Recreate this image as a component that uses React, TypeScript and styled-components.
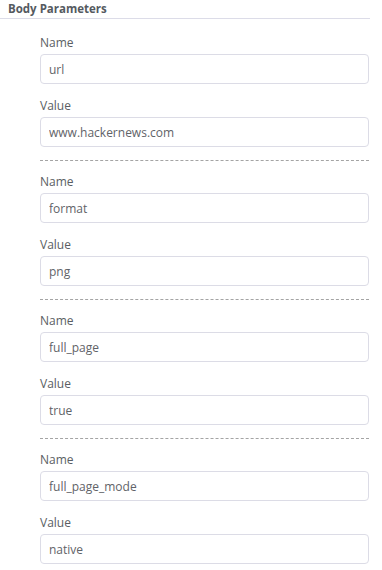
import styled, { createGlobalStyle } from 'styled-components';

const GlobalStyle = createGlobalStyle`
  body {
    margin: 0;
    background: #ffffff;
    font-family: 'Open Sans', Lato, sans-serif;
  }
`;

const Container = styled.div`
  width: 382px;
  height: 570px;
  overflow: hidden;
`;

const Header = styled.div`
  width: 362px;
  padding: 1px 0 2px 8px;
  border-bottom: 1px solid #dcdce8;
  font-size: 11.5px;
  line-height: 15px;
  font-weight: 700;
  color: #555a5f;
`;

const List = styled.div`
  display: flex;
  flex-direction: column;
  width: 329px;
  margin-left: 40px;
  padding-top: 16px;
`;

const Group = styled.div`
  display: flex;
  flex-direction: column;
  padding-bottom: 13px;
  margin-bottom: 13px;
  border-bottom: 1px dashed #a4a4a4;

  &:last-child {
    border-bottom: none;
  }
`;

const Field = styled.div`
  display: flex;
  flex-direction: column;
  gap: 3px;

  & + & {
    margin-top: 14px;
  }
`;

const Label = styled.label`
  font-size: 12px;
  line-height: 16px;
  color: #5a5e63;
`;

const Input = styled.input`
  box-sizing: border-box;
  width: 100%;
  height: 30px;
  padding: 0 8px;
  border: 1px solid #dcdce6;
  border-radius: 4px;
  font-family: 'Open Sans', Lato, sans-serif;
  font-size: 12px;
  color: #5f6368;
  background: #ffffff;
  outline: none;
`;

const params = [
  { name: 'url', value: 'www.hackernews.com' },
  { name: 'format', value: 'png' },
  { name: 'full_page', value: 'true' },
  { name: 'full_page_mode', value: 'native' },
];

export default function App() {
  return (
    <Container>
      <GlobalStyle />
      <Header>Body Parameters</Header>
      <List>
        {params.map((param) => (
          <Group key={param.name}>
            <Field>
              <Label>Name</Label>
              <Input defaultValue={param.name} />
            </Field>
            <Field>
              <Label>Value</Label>
              <Input defaultValue={param.value} />
            </Field>
          </Group>
        ))}
      </List>
    </Container>
  );
}
